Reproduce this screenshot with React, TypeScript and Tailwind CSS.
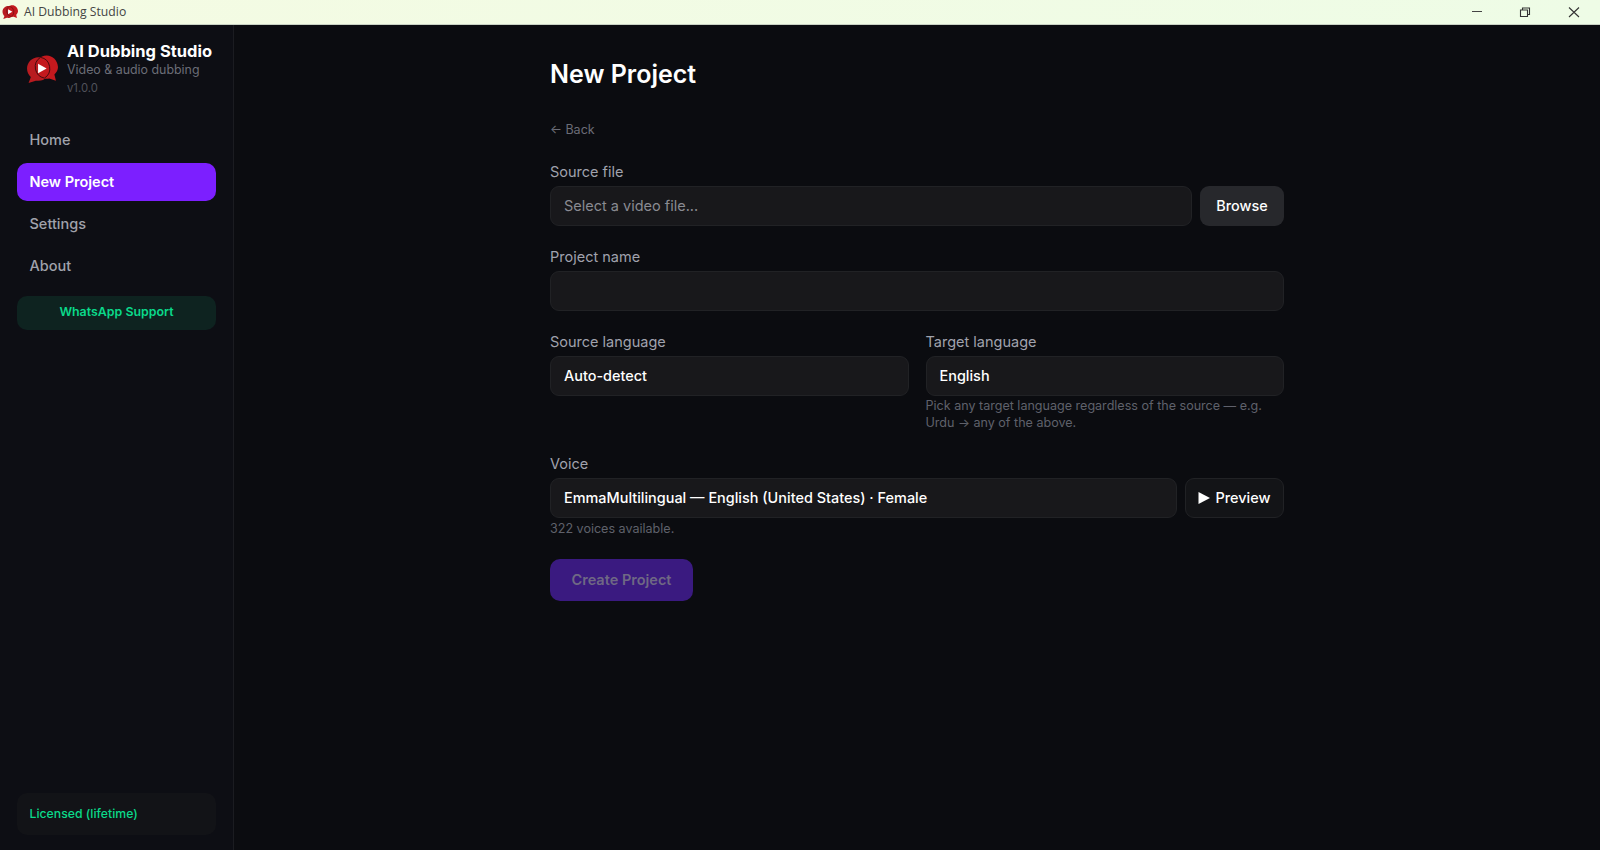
const FONT = "font-['Inter','Noto_Sans',sans-serif]";

function Logo({ className }: { className: string }) {
  return (
    <svg viewBox="0 0 31 27" className={className}>
      <path d="M12 2C5.900 2 1 6.900 1 13c0 3.300 1.400 6.200 3.700 8.200L2.500 27l7-2.200c.8.100 1.600.2 2.500.2 3.200 0 6-1.300 8-3.500V6C18 3.500 15.200 2 12 2z" fill="#b81b20" />
      <path d="M20 .5c-3.200 0-6 1.300-8 3.500v15c2 2.600 4.800 4 8 4 .9 0 1.700-.1 2.500-.3l6.500 2.300-1.500-6.200c2.200-2 3.500-5 3.500-7.300C30.500 5.400 26.100.5 20 .5z" fill="#c4191e" />
      <path d="M14.100 2.200A11 11 0 0 1 17.900 22.300M14.100 2.200A11 11 0 0 0 17.900 22.300" fill="none" stroke="#3d0a0d" strokeWidth="0.900" />
      <path d="M11.700 8.300v9.400l8.300-4.700z" fill="#fff" />
    </svg>
  );
}

function NavItem({ label, active }: { label: string; active?: boolean }) {
  return (
    <div
      className={
        active
          ? "flex h-[38px] items-center rounded-[10px] bg-[#7c1fff] px-[12.500px] text-[14.500px] font-semibold text-white"
          : "flex h-[38px] items-center rounded-[10px] px-[12.500px] text-[14.500px] font-medium text-[#a0a2ab]"
      }
    >
      {label}
    </div>
  );
}

function Field({ label, children }: { label: string; children: React.ReactNode }) {
  return (
    <div className="min-w-0 flex-1">
      <div className="mb-[4px] h-[21px] text-[14.500px] leading-[21px] text-[#a0a2ad]">{label}</div>
      {children}
    </div>
  );
}

function Box({ children, muted }: { children?: React.ReactNode; muted?: boolean }) {
  return (
    <div
      className={
        muted
          ? "flex h-[40px] w-full items-center rounded-[9px] border border-[#212225] bg-[#18181b] px-[13px] text-[14.500px] text-[#8a8b92]"
          : "flex h-[40px] w-full items-center rounded-[9px] border border-[#212225] bg-[#18181b] px-[13px] text-[14.450px] font-medium text-white"
      }
    >
      {children}
    </div>
  );
}

export default function App() {
  return (
    <div className={`${FONT} flex h-[850px] w-[1600px] flex-col overflow-hidden bg-[#0b0c10]`}>
      {/* window title bar */}
      <div className="flex h-[25px] shrink-0 items-center border-b border-[#c9d2c4] bg-gradient-to-r from-[#f4fbe3] to-[#eefce6] font-['Open_Sans',sans-serif]">
        <Logo className="ml-[2px] h-[14px] w-[16px]" />
        <span className="ml-[6px] text-[12.200px] text-[#444]">AI Dubbing Studio</span>
        <div className="ml-auto flex items-center">
          <svg viewBox="0 0 48 24" className="h-[24px] w-[48px]">
            <path d="M16 11.500h10" stroke="#444" strokeWidth="1" />
          </svg>
          <svg viewBox="0 0 48 24" className="h-[24px] w-[48px]">
            <path d="M16.500 10h7v6.500h-7zM18.500 10V8h7v6.500h-2" fill="none" stroke="#333" strokeWidth="1.100" />
          </svg>
          <svg viewBox="0 0 48 24" className="h-[24px] w-[48px]">
            <path d="M17 7.500l10 9.500M27 7.500l-10 9.500" stroke="#333" strokeWidth="1.100" />
          </svg>
        </div>
      </div>

      <div className="flex min-h-0 flex-1">
        {/* sidebar */}
        <aside className="flex w-[234px] shrink-0 flex-col border-r border-[#1b1c21] bg-[#0d0e14] px-[17px] pb-[15px]">
          <div className="flex h-[80px] items-center pt-[8px] pl-[9px]">
            <Logo className="h-[28px] w-[32px] shrink-0" />
            <div className="ml-[9px] mt-[-1px]">
              <div className="text-[16.500px] leading-[20px] font-bold whitespace-nowrap text-white">AI Dubbing Studio</div>
              <div className="text-[12.400px] leading-[17px] text-[#6b6d77]">Video &amp; audio dubbing</div>
              <div className="mt-[2px] text-[11.300px] leading-[16px] text-[#50525b]">v1.0.0</div>
            </div>
          </div>
          <nav className="mt-[15.500px] flex flex-col gap-[4px]">
            <NavItem label="Home" />
            <NavItem label="New Project" active />
            <NavItem label="Settings" />
            <NavItem label="About" />
          </nav>
          <div className="mt-[11px] flex h-[34px] items-center justify-center rounded-[10px] bg-[#0e2320] text-[12.400px] font-semibold text-[#0ad98a]">
            WhatsApp Support
          </div>
          <div className="mt-auto flex h-[42px] items-center rounded-[10px] bg-[#121317] px-[12.500px] text-[12.250px] font-medium text-[#0ad98a]">
            Licensed (lifetime)
          </div>
        </aside>

        {/* main */}
        <main className="min-w-0 flex-1">
          <div className="mx-auto w-[734px]">
            <h1 className="mt-[33px] text-[25px] leading-[32px] font-semibold text-white">New Project</h1>
            <div className="mt-[31px] h-[18px] text-[12.500px] leading-[18px] text-[#6b6d77]">← Back</div>

            <div className="mt-[22px] flex gap-[8px]">
              <Field label="Source file">
                <Box muted>Select a video file...</Box>
              </Field>
              <div className="flex h-[40px] w-[84px] shrink-0 items-center justify-center self-end rounded-[9px] bg-[#27282c] text-[14.400px] font-medium text-white">
                Browse
              </div>
            </div>

            <div className="mt-[20px]">
              <Field label="Project name">
                <Box />
              </Field>
            </div>

            <div className="mt-[20px] flex gap-[17px]">
              <Field label="Source language">
                <Box>Auto-detect</Box>
              </Field>
              <Field label="Target language">
                <Box>English</Box>
                <p className="mt-[2px] text-[12.550px] leading-[16.500px] text-[#5f616b]">
                  Pick any target language regardless of the source — e.g. Urdu → any of the above.
                </p>
              </Field>
            </div>

            <div className="mt-[22px] flex gap-[8px]">
              <Field label="Voice">
                <Box>EmmaMultilingual — English (United States) · Female</Box>
              </Field>
              <div className="flex h-[40px] w-[99px] shrink-0 items-center justify-center gap-[5px] self-end rounded-[9px] border border-[#212225] bg-[#131417] text-[14.500px] font-medium text-white">
                <svg viewBox="0 0 12 12" className="h-[12px] w-[12px]">
                  <path d="M.5 0v12L12 6z" fill="#fff" />
                </svg>
                Preview
              </div>
            </div>
            <div className="mt-[3px] text-[12.550px] leading-[16px] text-[#5f616b]">322 voices available.</div>

            <div className="mt-[22px] flex h-[42px] w-[143px] items-center justify-center rounded-[10px] bg-[#3a1a80] text-[14.500px] font-semibold text-[#6f6884]">
              Create Project
            </div>
          </div>
        </main>
      </div>
    </div>
  );
}
